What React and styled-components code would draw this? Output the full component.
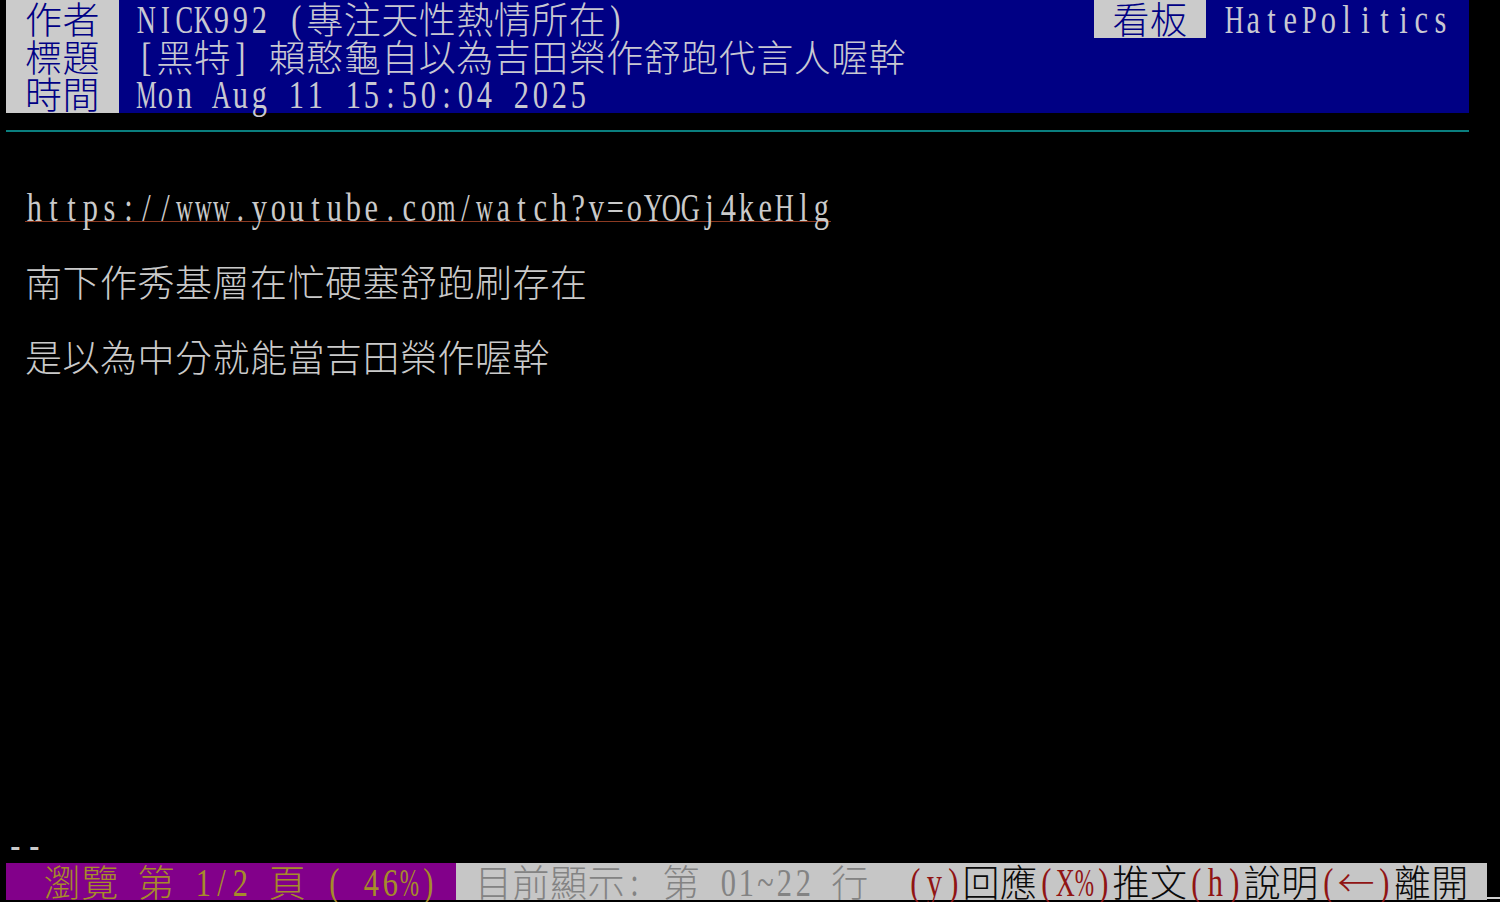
import React from 'react';
import styled, { createGlobalStyle } from 'styled-components';

const W = 18.75;
const H = 37.5;
const CJK = `"Noto Sans CJK TC", "Noto Sans CJK SC", sans-serif`;
const LATIN = `"Liberation Serif", "DejaVu Serif", serif`;

const tones = {
  text: { fg: '#cacaca', bg: 'transparent' },
  head: { fg: '#c8c8d2', bg: '#000084' },
  label: { fg: '#000084', bg: '#cbcbcb' },
  page: { fg: '#a68c2a', bg: '#82008a' },
  dim: { fg: '#838383', bg: '#c6c6c6' },
  key: { fg: '#901414', bg: '#c6c6c6' },
  cmd: { fg: '#0a0a0a', bg: '#c6c6c6' },
};

const squeeze = { normal: 0.76, capital: 0.66, broad: 0.58 };

const Global = createGlobalStyle`
  html, body { margin: 0; padding: 0; background: #000; }
  body { overflow: hidden; }
`;

const Screen = styled.div`
  width: 1500px;
  height: 902px;
  box-sizing: border-box;
  padding-left: 6px;
  background: #000;
  display: flex;
  flex-direction: column;
`;

const Row = styled.div`
  display: flex;
  flex: none;
  height: ${H}px;
  align-items: ${(p) => (p.$center ? 'center' : 'stretch')};
`;

const Seg = styled.span`
  display: flex;
  flex: none;
  height: ${H}px;
  color: ${(p) => tones[p.$tone].fg};
  background-color: ${(p) => tones[p.$tone].bg};
`;

const Link = styled(Seg)`
  background-image: linear-gradient(#8c3a22, #8c3a22);
  background-repeat: no-repeat;
  background-position: 0 33px;
  background-size: 100% 1px;
`;

const Glyph = styled.span`
  display: flex;
  flex: none;
  justify-content: center;
  width: ${(p) => (p.$kind === 'wide' ? 2 * W : W)}px;
  height: ${H}px;
  line-height: ${H}px;
  white-space: pre;
  font-family: ${(p) => (p.$kind === 'wide' ? CJK : LATIN)};
  font-size: ${(p) => (p.$kind === 'wide' ? '37px' : '40px')};
  font-weight: ${(p) => (p.$kind === 'wide' ? 300 : 400)};
  transform: ${(p) =>
    p.$kind === 'wide' ? 'none' : `scaleX(${squeeze[p.$kind]}) translateY(1px)`};
`;

const Rule = styled.div`
  width: ${78 * W}px;
  height: 2px;
  background: #0a7f7f;
`;

const Cursor = styled.span`
  flex: none;
  width: ${W}px;
  height: ${H - 1}px;
  box-sizing: border-box;
  border-bottom: 2px solid #d0d0d0;
`;

const isWide = (ch) => /[\u2190\u2500\u3000-\u9fff\uff00-\uffef]/.test(ch);
const kindOf = (ch) =>
  isWide(ch) ? 'wide' : /[mwMW%]/.test(ch) ? 'broad' : /[A-Z]/.test(ch) ? 'capital' : 'normal';
const cols = (s) => Array.from(s).reduce((n, ch) => n + (isWide(ch) ? 2 : 1), 0);
const fill = (s, n) => s + ' '.repeat(Math.max(0, n - cols(s)));

const Chars = ({ text }) =>
  Array.from(text).map((ch, i) => (
    <Glyph key={i} $kind={kindOf(ch)}>
      {ch}
    </Glyph>
  ));

const T = ({ tone, children, link }) => {
  const C = link ? Link : Seg;
  return (
    <C $tone={tone}>
      <Chars text={children} />
    </C>
  );
};

const header = [
  [
    ['label', ' 作者 '],
    ['head', fill(' NICK992 (專注天性熱情所在)', 52)],
    ['label', ' 看板 '],
    ['head', ' HatePolitics '],
  ],
  [
    ['label', ' 標題 '],
    ['head', fill(' [黑特] 賴憨龜自以為吉田榮作舒跑代言人喔幹', 72)],
  ],
  [
    ['label', ' 時間 '],
    ['head', fill(' Mon Aug 11 15:50:04 2025', 72)],
  ],
];

const body = [
  null,
  'url',
  null,
  ' 南下作秀基層在忙硬塞舒跑刷存在',
  null,
  ' 是以為中分就能當吉田榮作喔幹',
  null, null, null, null, null, null, null, null, null, null, null, null,
  '--',
];

const footer = [
  ['page', '  瀏覽 第 1/2 頁 ( 46%) '],
  ['dim', ' 目前顯示: 第 01~22 行  '],
  ['key', '(y)'],
  ['cmd', '回應'],
  ['key', '(X%)'],
  ['cmd', '推文'],
  ['key', '(h)'],
  ['cmd', '說明'],
  ['key', '(←)'],
  ['cmd', '離開 '],
];

export default function App() {
  return (
    <>
      <Global />
      <Screen>
        {header.map((segs, r) => (
          <Row key={'h' + r}>
            {segs.map(([tone, text], i) => (
              <T key={i} tone={tone}>
                {text}
              </T>
            ))}
          </Row>
        ))}
        <Row $center>
          <Rule />
        </Row>
        {body.map((line, r) => (
          <Row key={'b' + r}>
            {line === 'url' ? (
              <>
                <T tone="text"> </T>
                <T tone="text" link>
                  https://www.youtube.com/watch?v=oYOGj4keHlg
                </T>
              </>
            ) : line ? (
              <T tone="text">{line}</T>
            ) : null}
          </Row>
        ))}
        <Row>
          {footer.map(([tone, text], i) => (
            <T key={i} tone={tone}>
              {text}
            </T>
          ))}
          <Cursor />
        </Row>
      </Screen>
    </>
  );
}
